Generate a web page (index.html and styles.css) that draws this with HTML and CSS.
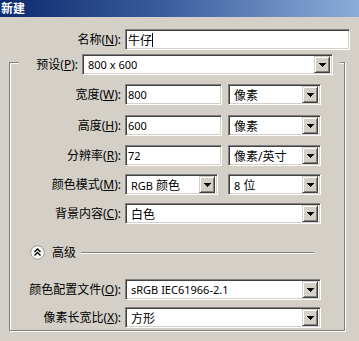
FILE: index.html
```html
<!DOCTYPE html>
<html lang="zh-CN">
<head>
<meta charset="utf-8">
<title>新建</title>
<link rel="stylesheet" href="styles.css">
</head>
<body>
<div class="dialog">
  <div class="titlebar"><span class="title">新建</span></div>

  <div class="row name-row">
    <span class="lbl lbl-top">名称(<u>N</u>):</span>
    <div class="field text w-name"><span>牛仔</span><span class="caret"></span></div>
  </div>

  <div class="group">
    <div class="group-head">
      <span class="lbl lbl-head">预设(<u>P</u>):</span>
      <div class="field select w-preset"><span class="val lat">800 x 600</span><span class="btn"><svg width="7" height="4" viewBox="0 0 7 4"><path d="M0 0h7v1h-1v1h-1v1h-1v1h-1v-1h-1v-1h-1v-1h-1z" fill="#000"/></svg></span></div>
    </div>

    <div class="row r1">
      <span class="lbl">宽度(<u>W</u>):</span>
      <div class="field text w-num"><span class="lat">800</span></div>
      <div class="field select w-unit gap6"><span class="val">像素</span><span class="btn"><svg width="7" height="4" viewBox="0 0 7 4"><path d="M0 0h7v1h-1v1h-1v1h-1v1h-1v-1h-1v-1h-1v-1h-1z" fill="#000"/></svg></span></div>
    </div>

    <div class="row r2">
      <span class="lbl">高度(<u>H</u>):</span>
      <div class="field text w-num"><span class="lat">600</span></div>
      <div class="field select w-unit gap6"><span class="val">像素</span><span class="btn"><svg width="7" height="4" viewBox="0 0 7 4"><path d="M0 0h7v1h-1v1h-1v1h-1v1h-1v-1h-1v-1h-1v-1h-1z" fill="#000"/></svg></span></div>
    </div>

    <div class="row r3">
      <span class="lbl">分辨率(<u>R</u>):</span>
      <div class="field text w-num"><span class="lat">72</span></div>
      <div class="field select w-unit gap6"><span class="val">像素/英寸</span><span class="btn"><svg width="7" height="4" viewBox="0 0 7 4"><path d="M0 0h7v1h-1v1h-1v1h-1v1h-1v-1h-1v-1h-1v-1h-1z" fill="#000"/></svg></span></div>
    </div>

    <div class="row r4">
      <span class="lbl">颜色模式(<u>M</u>):</span>
      <div class="field select w-unit"><span class="val"><span class="lat">RGB</span> 颜色</span><span class="btn"><svg width="7" height="4" viewBox="0 0 7 4"><path d="M0 0h7v1h-1v1h-1v1h-1v1h-1v-1h-1v-1h-1v-1h-1z" fill="#000"/></svg></span></div>
      <div class="field select w-unit gap10"><span class="val"><span class="lat">8</span> 位</span><span class="btn"><svg width="7" height="4" viewBox="0 0 7 4"><path d="M0 0h7v1h-1v1h-1v1h-1v1h-1v-1h-1v-1h-1v-1h-1z" fill="#000"/></svg></span></div>
    </div>

    <div class="row r5">
      <span class="lbl">背景内容(<u>C</u>):</span>
      <div class="field select w-wide"><span class="val">白色</span><span class="btn"><svg width="7" height="4" viewBox="0 0 7 4"><path d="M0 0h7v1h-1v1h-1v1h-1v1h-1v-1h-1v-1h-1v-1h-1z" fill="#000"/></svg></span></div>
    </div>

    <div class="adv">
      <svg class="adv-icon" width="15" height="15" viewBox="0 0 15 15">
        <circle cx="7.5" cy="7.5" r="6.8" fill="#f8f8f6" stroke="#9a9890" stroke-width="1"/>
        <polyline points="4.5,7 7.5,4 10.5,7" fill="none" stroke="#000" stroke-width="1.4"/>
        <polyline points="4.5,10.5 7.5,7.5 10.5,10.5" fill="none" stroke="#000" stroke-width="1.4"/>
      </svg>
      <span class="adv-text">高级</span>
      <span class="adv-line"></span>
    </div>

    <div class="row r6">
      <span class="lbl">颜色配置文件(<u>O</u>):</span>
      <div class="field select w-wide"><span class="val lat">sRGB IEC61966-2.1</span><span class="btn"><svg width="7" height="4" viewBox="0 0 7 4"><path d="M0 0h7v1h-1v1h-1v1h-1v1h-1v-1h-1v-1h-1v-1h-1z" fill="#000"/></svg></span></div>
    </div>

    <div class="row r7">
      <span class="lbl">像素长宽比(<u>X</u>):</span>
      <div class="field select w-wide"><span class="val">方形</span><span class="btn"><svg width="7" height="4" viewBox="0 0 7 4"><path d="M0 0h7v1h-1v1h-1v1h-1v1h-1v-1h-1v-1h-1v-1h-1z" fill="#000"/></svg></span></div>
    </div>
  </div>
</div>
</body>
</html>
```

FILE: styles.css
```css
* { box-sizing: border-box; }

html, body {
  margin: 0;
  padding: 0;
}

body {
  width: 359px;
  height: 341px;
  overflow: hidden;
  background: #d4d0c8;
  font-family: "Noto Sans", "Noto Sans CJK SC", sans-serif;
  font-size: 12px;
  color: #000;
}

.dialog {
  width: 359px;
  height: 341px;
  background: #d4d0c8;
}

.titlebar {
  height: 17px;
  background: linear-gradient(90deg, #0c2a6e 0%, #3a5c9c 45%, #8cadd9 100%);
  display: flex;
  align-items: center;
  padding-left: 1px;
}

.title {
  color: #fff;
  font-weight: bold;
  font-size: 12px;
  line-height: 14px;
}

.row {
  display: flex;
  align-items: center;
  height: 21px;
}

.lbl {
  width: 111px;
  margin-right: 4px;
  text-align: right;
  white-space: nowrap;
  line-height: 16px;
}

.lbl u { text-decoration: underline; text-underline-offset: 1px; }

.lat { font-size: 11px; }

.name-row { margin-top: 12px; }
.lbl-top { width: 121px; }

.field {
  height: 21px;
  display: flex;
  align-items: center;
  background: #fff;
  border: 1px solid;
  border-color: #808080 #fff #fff #808080;
  box-shadow: inset 1px 1px 0 #404040, inset -1px -1px 0 #d4d0c8;
  white-space: nowrap;
  overflow: hidden;
}

.text { padding-left: 2px; }
.select { padding-left: 5px; padding-right: 2px; }
.select .val { flex: 1; overflow: hidden; }

.caret {
  display: inline-block;
  width: 1px;
  height: 14px;
  background: #000;
}

.btn {
  width: 16px;
  height: 17px;
  flex: none;
  background: #d4d0c8;
  border: 1px solid;
  border-color: #d4d0c8 #404040 #404040 #d4d0c8;
  box-shadow: inset 1px 1px 0 #fff, inset -1px -1px 0 #808080;
  display: flex;
  align-items: center;
  justify-content: center;
}

.btn svg { display: block; shape-rendering: crispEdges; }

.w-name { width: 225px; }
.w-preset { width: 251px; }
.w-num { width: 97px; }
.w-unit { width: 93px; }
.w-wide { width: 196px; }
.gap6 { margin-left: 6px; }
.gap10 { margin-left: 10px; }

.group {
  margin: 12px 14px 0 9px;
  border: 1px solid #808080;
  box-shadow: inset 1px 1px 0 #fff, 1px 1px 0 #fff;
  padding-bottom: 2px;
}

.group-head {
  display: flex;
  align-items: center;
  width: fit-content;
  margin: -9px 0 0 9px;
  padding: 0 7px 0 13px;
  background: #d4d0c8;
  height: 21px;
}

.lbl-head { width: 46px; }

.r1 { margin-top: 9px; }
.r2 { margin-top: 10px; }
.r3 { margin-top: 9px; }
.r4 { margin-top: 8px; }
.r5 { margin-top: 8px; }
.r6 { margin-top: 19px; }
.r7 { margin-top: 7px; }

.adv {
  display: flex;
  align-items: center;
  height: 15px;
  margin: 21px 30px 0 20px;
}

.adv-icon { display: block; flex: none; }

.adv-text {
  margin-left: 7px;
  line-height: 16px;
}

.adv-line {
  flex: 1;
  margin-left: 5px;
  height: 2px;
  border-top: 1px solid #808080;
  border-bottom: 1px solid #fff;
}
```
